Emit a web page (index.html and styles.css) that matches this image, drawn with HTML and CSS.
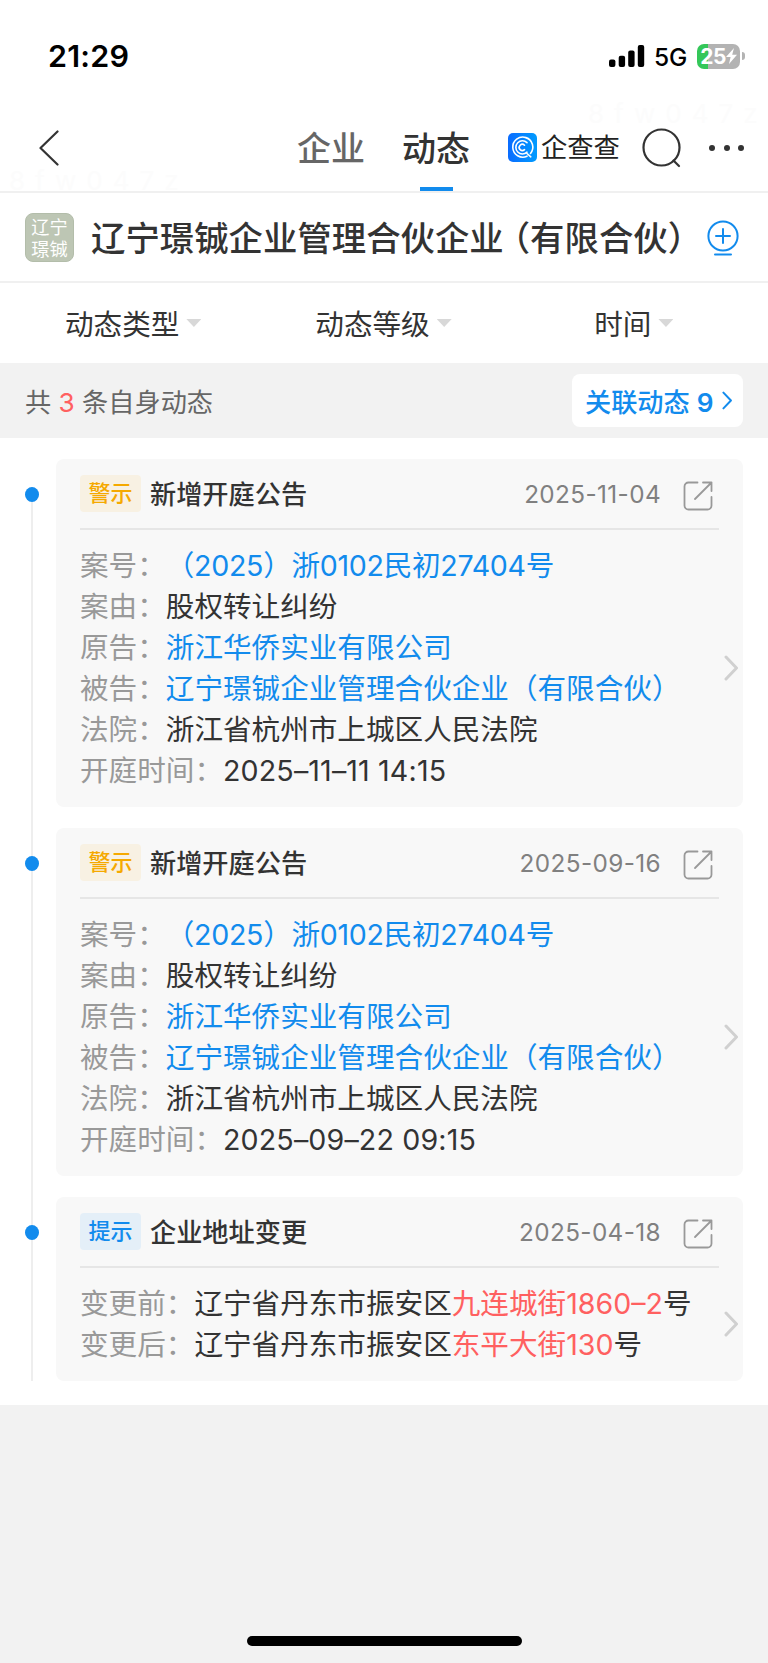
FILE: index.html
```
<!DOCTYPE html>
<html lang="zh-CN">

<head>
    <meta charset="UTF-8">
    <meta name="viewport" content="width=device-width, initial-scale=1.0">
    <title>企查查 - 动态</title>
    <link rel="stylesheet" href="styles.css">
</head>

<body>
    <!-- shared icons -->
    <svg class="sprite">
        <symbol id="share" viewBox="0 0 30 30">
            <path d="M14.5 1.5H5.5a4 4 0 0 0-4 4v19a4 4 0 0 0 4 4h19a4 4 0 0 0 4-4V16M20 1.5h8.5V10M28.5 1.5L12 18" />
        </symbol>
        <symbol id="arrow" viewBox="0 0 14 26">
            <path d="M2 2l10.5 11L2 24" />
        </symbol>
    </svg>

    <div class="status-bar">
        <span class="clock">21:29</span>
        <div class="status-right">
            <svg class="signal" viewBox="0 0 36 22">
                <rect x="0" y="14.5" width="6.4" height="7.5" rx="2" />
                <rect x="9.7" y="10.8" width="6.4" height="11.2" rx="2" />
                <rect x="19.2" y="5.5" width="6.4" height="16.5" rx="2" />
                <rect x="28.8" y="0" width="6.4" height="22" rx="2" />
            </svg>
            <span class="network">5G</span>
            <div class="battery">
                <span>25</span>
                <svg class="bolt" viewBox="0 0 11 16">
                    <path d="M8 0L0 9h4.6L3 16l8-9.2H6.2z" />
                </svg>
            </div>
            <span class="battery-tip"></span>
        </div>
    </div>

    <div class="nav">
        <span class="watermark mark-left">8fw047z</span>
        <span class="watermark mark-right">8fw047z</span>
        <svg class="back" viewBox="0 0 20 36">
            <path d="M18.5 1.5L1.5 18l17 16.5" />
        </svg>
        <div class="tabs">
            <span class="tab">企业</span>
            <span class="tab active">动态</span>
        </div>
        <div class="brand">
            <svg class="logo" viewBox="0 0 29 29">
                <defs>
                    <linearGradient id="logoBg">
                        <stop offset="0" stop-color="#0a6cff" />
                        <stop offset="1" stop-color="#019cff" />
                    </linearGradient>
                </defs>
                <rect width="29" height="29" rx="5" fill="url(#logoBg)" stroke="none" />
                <path d="M22.5 20.5A10 10 0 1 0 19 23.2M19 19.2a6.6 6.6 0 1 1 0-9.6M16.5 16.6a3.1 3.1 0 1 1 0-4.4M19 20.5l3.8 3.3" />
            </svg>
            <span class="brand-name">企查查</span>
        </div>
        <svg class="search" viewBox="0 0 40 40">
            <circle cx="19.5" cy="19.5" r="18" />
            <path d="M31.5 32.5l5.5 5.5" />
        </svg>
        <div class="more"><i></i><i></i><i></i></div>
    </div>

    <div class="company">
        <div class="avatar">辽宁<br>璟铖</div>
        <h1>辽宁璟铖企业管理合伙企<span class="tight">业</span>（有限合伙）</h1>
        <svg class="follow" viewBox="0 0 32 36">
            <circle cx="16" cy="16" r="14.6" />
            <path d="M16 9v14M9 16h14M8 34.5h16" />
        </svg>
    </div>

    <div class="filters">
        <div class="filter">动态类型<i></i></div>
        <div class="filter">动态等级<i></i></div>
        <div class="filter">时间<i></i></div>
    </div>

    <div class="summary">
        <span>共 <em>3</em> 条自身动态</span>
        <div class="related"><span>关联动态 <b>9</b></span><svg><use href="#arrow" /></svg></div>
    </div>

    <div class="timeline">
        <div class="card">
            <div class="card-head">
                <span class="tag warn">警示</span>
                <h2>新增开庭公告</h2>
                <span class="date">2025-11-04</span>
                <svg class="share"><use href="#share" /></svg>
            </div>
            <div class="card-body">
                <p><label>案号：</label><a class="case-no">（2025）浙0102民初27404号</a></p>
                <p><label>案由：</label>股权转让纠纷</p>
                <p><label>原告：</label><a>浙江华侨实业有限公司</a></p>
                <p><label>被告：</label><a>辽宁璟铖企业管理合伙企业（有限合伙）</a></p>
                <p><label>法院：</label>浙江省杭州市上城区人民法院</p>
                <p><label>开庭时间：</label><span class="time">2025–11–11 14:15</span></p>
                <svg class="arrow"><use href="#arrow" /></svg>
            </div>
        </div>

        <div class="card">
            <div class="card-head">
                <span class="tag warn">警示</span>
                <h2>新增开庭公告</h2>
                <span class="date">2025-09-16</span>
                <svg class="share"><use href="#share" /></svg>
            </div>
            <div class="card-body">
                <p><label>案号：</label><a class="case-no">（2025）浙0102民初27404号</a></p>
                <p><label>案由：</label>股权转让纠纷</p>
                <p><label>原告：</label><a>浙江华侨实业有限公司</a></p>
                <p><label>被告：</label><a>辽宁璟铖企业管理合伙企业（有限合伙）</a></p>
                <p><label>法院：</label>浙江省杭州市上城区人民法院</p>
                <p><label>开庭时间：</label><span class="time">2025–09–22 09:15</span></p>
                <svg class="arrow"><use href="#arrow" /></svg>
            </div>
        </div>

        <div class="card">
            <div class="card-head">
                <span class="tag info">提示</span>
                <h2>企业地址变更</h2>
                <span class="date">2025-04-18</span>
                <svg class="share"><use href="#share" /></svg>
            </div>
            <div class="card-body">
                <p><label>变更前：</label>辽宁省丹东市振安区<em>九连城街1860–2</em>号</p>
                <p><label>变更后：</label>辽宁省丹东市振安区<em>东平大街130</em>号</p>
                <svg class="arrow"><use href="#arrow" /></svg>
            </div>
        </div>
    </div>

    <div class="home-bar"></div>
</body>

</html>
```

FILE: styles.css
```
* {
    box-sizing: border-box;
}

body {
    margin: 0;
    height: 1663px;
    display: flex;
    flex-direction: column;
    background-color: #f2f2f2;
    font-family: Inter, "Noto Sans CJK SC", sans-serif;
    text-spacing-trim: space-all;
    color: #333;
    overflow: hidden;
}

svg {
    display: block;
    flex: none;
    fill: none;
    stroke-linecap: round;
    stroke-linejoin: round;
}

em, i {
    font-style: normal;
}

em {
    color: #ff6060;
}

h1, h2, p {
    margin: 0;
    white-space: nowrap;
}

.sprite {
    position: absolute;
    width: 0;
    height: 0;
}

/* status bar */
.status-bar {
    height: 104px;
    padding: 8px 23px 0 48px;
    display: flex;
    justify-content: space-between;
    align-items: center;
    background: #fff;
    color: #000;
}

.clock {
    margin-top: -2px;
    font-size: 30.5px;
    font-weight: 600;
    letter-spacing: 0.2px;
}

.status-right {
    display: flex;
    align-items: center;
}

.signal {
    width: 36px;
    height: 22px;
    fill: #000;
}

.network {
    margin: 1px 10px 0 9px;
    font-size: 24.5px;
    font-weight: 500;
    letter-spacing: -0.2px;
}

.battery {
    width: 43px;
    height: 25px;
    border-radius: 7px;
    background: linear-gradient(to right, #34c759 11px, #b3b3b3 11px);
    display: flex;
    align-items: center;
    justify-content: center;
    color: #fff;
    font-size: 21px;
    font-weight: 700;
    letter-spacing: -0.5px;
}

.bolt {
    width: 11px;
    height: 16px;
    fill: #fff;
}

.battery-tip {
    width: 3px;
    height: 8px;
    margin-left: 2px;
    border-radius: 0 4px 4px 0;
    background: #b3b3b3;
}

/* navigation */
.nav {
    position: relative;
    height: 89px;
    padding: 0 24px 0 39px;
    display: flex;
    align-items: center;
    background: #fff;
    border-bottom: 2px solid #f0f0f0;
}

.watermark {
    position: absolute;
    font-size: 26px;
    letter-spacing: 10px;
    line-height: 30px;
    color: #fcfcfc;
}

.mark-left {
    left: 9px;
    top: 62px;
}

.mark-right {
    left: 588px;
    top: -5px;
}

.back {
    width: 20px;
    height: 36px;
    stroke: #333;
    stroke-width: 2.2;
}

.tabs {
    align-self: stretch;
    display: flex;
    gap: 37px;
    margin-left: 238px;
}

.tab {
    padding-top: 2px;
    font-size: 34px;
    font-weight: 500;
    line-height: 85px;
    color: #666;
}

.tab.active {
    color: #333;
    background: linear-gradient(#128bed, #128bed) center bottom / 33px 4px no-repeat;
}

.brand {
    display: flex;
    align-items: center;
    gap: 4px;
    margin-left: 38px;
}

.logo {
    width: 29px;
    height: 29px;
    stroke: #fff;
    stroke-width: 1.6;
}

.brand-name {
    font-size: 26.3px;
    line-height: 30px;
    color: #222;
}

.search {
    width: 40px;
    height: 40px;
    margin-left: 22px;
    stroke: #333;
    stroke-width: 2.2;
}

.more {
    display: flex;
    gap: 8.5px;
    margin-left: auto;
}

.more i {
    width: 6px;
    height: 6px;
    border-radius: 50%;
    background: #333;
}

/* company */
.company {
    height: 90px;
    padding: 0 29px 0 25px;
    display: flex;
    align-items: center;
    background: #fff;
    border-bottom: 2px solid #f0f0f0;
}

.avatar {
    width: 49px;
    height: 49px;
    padding-top: 2px;
    border: 1px solid #b3bdaa;
    border-radius: 8px;
    background: #bdc6b4;
    color: #fff;
    font-size: 18.2px;
    line-height: 22px;
    text-align: center;
}

.company h1 {
    margin: 4px -20px 0 17px;
    font-size: 34.4px;
    font-weight: 500;
    line-height: 50px;
}

.tight {
    letter-spacing: -8px;
}

.follow {
    width: 32px;
    height: 36px;
    margin: 2px 0 0 auto;
    stroke: #128bed;
    stroke-width: 2;
}

/* filters */
.filters {
    height: 80px;
    padding: 0 9px 2px 8px;
    display: flex;
    background: #fff;
}

.filter {
    flex: 1;
    display: flex;
    align-items: center;
    justify-content: center;
    font-size: 28.6px;
}

.filter i {
    width: 15px;
    height: 8px;
    margin: 2px 0 0 7px;
    background: #d8d8d8;
    clip-path: polygon(0 0, 100% 0, 50% 100%);
}

/* summary */
.summary {
    height: 75px;
    padding: 0 25px;
    display: flex;
    justify-content: space-between;
    align-items: center;
    font-size: 26.2px;
    color: #666;
}

.related {
    width: 171px;
    height: 53px;
    padding: 0 11px 0 13px;
    display: flex;
    align-items: center;
    justify-content: space-between;
    border-radius: 8px;
    background: #fff;
    color: #128bed;
    font-weight: 500;
    white-space: nowrap;
}

.related b {
    font-weight: 600;
}

.related svg {
    width: 10px;
    height: 19px;
    stroke: #128bed;
    stroke-width: 2.8;
}

/* timeline */
.timeline {
    padding: 21px 25px 24px 56px;
    display: flex;
    flex-direction: column;
    gap: 21px;
    background: linear-gradient(#eee, #eee) 31px 56px / 2px 887px no-repeat #fff;
}

.card {
    position: relative;
    padding: 0 24px 16px;
    border-radius: 8px;
    background: #f8f8f8;
}

.card::before {
    content: "";
    position: absolute;
    left: -31px;
    top: 28px;
    width: 14px;
    height: 15px;
    border-radius: 50%;
    background: #128bed;
}

.card-head {
    height: 71px;
    display: flex;
    align-items: center;
    border-bottom: 2px solid #e6e6e6;
}

.tag {
    width: 61px;
    height: 37px;
    margin-right: 9px;
    border-radius: 4px;
    font-size: 22px;
    line-height: 36px;
    text-align: center;
    font-weight: 500;
}

.tag.warn {
    background: #f8f1e3;
    color: #f5a900;
}

.tag.info {
    background: #e4eff8;
    color: #128bed;
}

.card h2 {
    padding-bottom: 2px;
    font-size: 26.2px;
    font-weight: 500;
}

.date {
    margin-left: auto;
    font-size: 24.3px;
    color: #808080;
    letter-spacing: 0.4px;
}

.share {
    width: 30px;
    height: 30px;
    margin: 4px 6px 0 22px;
    stroke: #999;
    stroke-width: 1.8;
}

.card-body {
    position: relative;
    padding-top: 15px;
    font-size: 28.6px;
    line-height: 41px;
}

.card-body p {
    height: 41px;
}

label {
    color: #999;
}

a {
    color: #128bed;
}

.case-no {
    letter-spacing: -0.3px;
}

.time {
    letter-spacing: 0.15px;
}

.arrow {
    position: absolute;
    right: -19px;
    top: calc(50% - 6px);
    width: 14px;
    height: 26px;
    stroke: #d0d0d0;
    stroke-width: 3;
}

.home-bar {
    width: 275px;
    height: 10px;
    margin: auto auto 17px 247px;
    border-radius: 5px;
    background: #000;
}
```
